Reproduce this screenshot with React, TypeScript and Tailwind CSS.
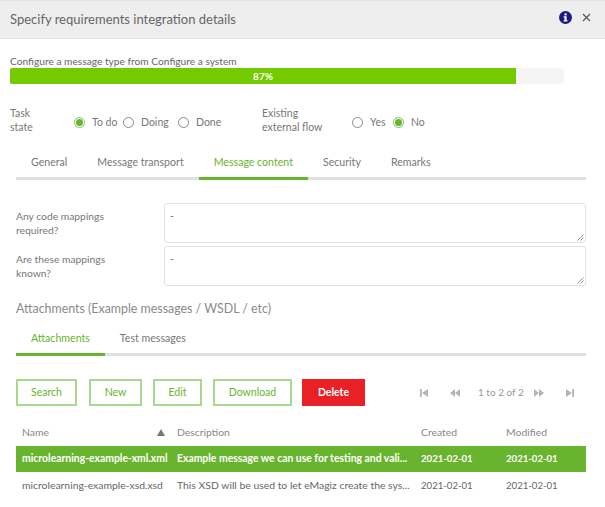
import React from 'react';

const tabs = ['General', 'Message transport', 'Message content', 'Security', 'Remarks'];

function Radio({ label, checked, className }: { label: string; checked?: boolean; className?: string }) {
  return (
    <div className={`flex items-center ${className ?? ''}`}>
      <span className={`flex h-[11px] w-[11px] items-center justify-center rounded-full border bg-white ${checked ? 'border-[#7cc35a]' : 'border-[#8a8a8a]'}`}>
        {checked && <span className="h-[7px] w-[7px] rounded-full bg-[#69b42e]" />}
      </span>
      <span className="ml-[7px] text-[10.5px] text-[#777]">{label}</span>
    </div>
  );
}

function Field({ label }: { label: React.ReactNode }) {
  return (
    <div className="flex">
      <div className="w-[148px] pt-[6px] text-[10.3px] leading-[14px] text-[#777]">{label}</div>
      <div className="relative h-[40px] flex-1 rounded-[3px] border border-[#e2e2e2] bg-white px-[5px] pt-[5px] text-[11px] leading-[14px] text-[#777]">
        -
        <svg className="absolute bottom-[1px] right-[1px]" width="7" height="7" viewBox="0 0 7 7">
          <path d="M0.5 6.5 L6.5 0.5 M3.5 6.5 L6.5 3.5" stroke="#777" strokeWidth="0.8" />
        </svg>
      </div>
    </div>
  );
}

function OutlineBtn({ label, width }: { label: string; width: string }) {
  return (
    <button className={`h-[27px] border-2 border-[#a9d88f] bg-white text-[10.5px] text-[#69b42e] ${width}`}>{label}</button>
  );
}

function PagerIcon({ d, className }: { d: string; className?: string }) {
  return (
    <svg className={className} width="10" height="10" viewBox="0 0 10 10">
      <path d={d} fill="#b5b5b5" />
    </svg>
  );
}

export default function App() {
  return (
    <div className="h-[507px] w-[605px] overflow-hidden bg-white font-['Lato','Open_Sans',sans-serif]">
      <div className="flex h-[39px] items-center justify-between border-t border-b border-[#e3e3e3] bg-[#eeeeee] pl-[10px] pr-[14px]">
        <span className="text-[13px] text-[#666]">Specify requirements integration details</span>
        <div className="-mt-[5px] flex items-center gap-[10px]">
          <svg width="13" height="13" viewBox="0 0 13 13">
            <circle cx="6.5" cy="6.5" r="6.5" fill="#1b1a7e" />
            <rect x="5.5" y="2.4" width="2.2" height="2" fill="#fff" />
            <path d="M4.6 5.3 H7.6 V9.2 H8.5 V10.5 H4.6 V9.2 H5.5 V6.6 H4.6 Z" fill="#fff" />
          </svg>
          <svg width="9" height="9" viewBox="0 0 9 9">
            <path d="M1 1 L8 8 M8 1 L1 8" stroke="#555" strokeWidth="1.2" />
          </svg>
        </div>
      </div>

      <div className="px-[10px] pt-[15px]">
        <div className="text-[10.2px] leading-[14px] text-[#666]">Configure a message type from Configure a system</div>
        <div className="h-[16px] w-[554px] overflow-hidden rounded-[2px] bg-[#f5f5f5]">
          <div className="flex h-full w-[506px] items-center justify-center bg-[#74c900] text-[10px] font-bold text-white">87%</div>
        </div>

        <div className="mt-[22px] flex h-[28px] items-start">
          <div className="w-[64px] text-[10.5px] leading-[14px] text-[#777]">Task<br />state</div>
          <div className="flex w-[188px] items-center pt-[9px]">
            <Radio label="To do" checked className="w-[49px]" />
            <Radio label="Doing" className="w-[55px]" />
            <Radio label="Done" />
          </div>
          <div className="w-[89px] text-[10.5px] leading-[14px] text-[#777]">Existing<br />external flow</div>
          <div className="ml-[1px] flex items-center pt-[9px]">
            <Radio label="Yes" className="w-[41px]" />
            <Radio label="No" checked />
          </div>
        </div>
      </div>

      <div className="pl-[16px] pr-[19px]">
        <div className="mt-[14px] flex h-[32px] border-b-[3px] border-[#e0e0e0]">
          {tabs.map((t, i) => (
            <div
              key={t}
              className={`-mb-[3px] flex h-[32px] items-center px-[15px] text-[10.6px] whitespace-nowrap ${i === 2 ? 'border-b-[3px] border-[#69b42e] text-[#69b42e]' : 'pb-[3px] text-[#777]'}`}
            >
              {t}
            </div>
          ))}
        </div>

        <div className="mt-[23px] flex flex-col gap-[3px]">
          <Field label={<>Any code mappings<br />required?</>} />
          <Field label={<>Are these mappings<br />known?</>} />
        </div>

        <div className="mt-[14px] text-[12.4px] leading-[18px] text-[#8a8a8a]">Attachments (Example messages / WSDL / etc)</div>

        <div className="mt-[6px] flex h-[32px] border-b-[3px] border-[#e0e0e0]">
          <div className="-mb-[3px] flex h-[32px] items-center border-b-[3px] border-[#69b42e] px-[15px] text-[10.6px] text-[#69b42e]">Attachments</div>
          <div className="flex h-[29px] items-center px-[15px] text-[10.6px] text-[#777]">Test messages</div>
        </div>

        <div className="mt-[23px] flex items-center">
          <OutlineBtn label="Search" width="w-[61px]" />
          <div className="w-[12px]" />
          <OutlineBtn label="New" width="w-[53px]" />
          <div className="w-[11px]" />
          <OutlineBtn label="Edit" width="w-[49px]" />
          <div className="w-[11px]" />
          <OutlineBtn label="Download" width="w-[79px]" />
          <div className="w-[10px]" />
          <button className="h-[27px] w-[63px] bg-[#e92025] text-[10.5px] font-bold text-white">Delete</button>
          <div className="ml-[54px] flex items-center text-[10px] text-[#999]">
            <PagerIcon d="M1 1 H2.8 V9 H1 Z M9 1 V9 L3 5 Z" />
            <PagerIcon d="M5 1 V9 L0 5 Z M10 1 V9 L5 5 Z" className="ml-[21px]" />
            <span className="ml-[18px]">1 to 2 of 2</span>
            <PagerIcon d="M0 1 V9 L5 5 Z M5 1 V9 L10 5 Z" className="ml-[10px]" />
            <PagerIcon d="M1 1 V9 L7 5 Z M7.2 1 H9 V9 H7.2 Z" className="ml-[21px]" />
          </div>
        </div>

        <div className="mt-[14px] text-[10.4px]">
          <div className="grid h-[26px] grid-cols-[155px_244px_85px_1fr] items-center text-[#888]">
            <div className="flex items-center justify-between pl-[6px] pr-[6px]">
              <span>Name</span>
              <svg width="8" height="7" viewBox="0 0 8 7"><path d="M4 0 L8 7 H0 Z" fill="#777" /></svg>
            </div>
            <div className="pl-[6px]">Description</div>
            <div className="pl-[6px]">Created</div>
            <div className="pl-[6px]">Modified</div>
          </div>
          <div className="grid h-[26px] grid-cols-[155px_244px_85px_1fr] items-center bg-[#69b42e] font-bold text-white">
            <div className="whitespace-nowrap pl-[6px]">microlearning-example-xml.xml</div>
            <div className="whitespace-nowrap pl-[6px]">Example message we can use for testing and vali...</div>
            <div className="pl-[6px] text-[9.6px]">2021-02-01</div>
            <div className="pl-[6px] text-[9.6px]">2021-02-01</div>
          </div>
          <div className="grid h-[28px] grid-cols-[155px_244px_85px_1fr] items-center text-[#666]">
            <div className="whitespace-nowrap pl-[6px]">microlearning-example-xsd.xsd</div>
            <div className="whitespace-nowrap pl-[6px]">This XSD will be used to let eMagiz create the sys...</div>
            <div className="pl-[6px] text-[9.6px]">2021-02-01</div>
            <div className="pl-[6px] text-[9.6px]">2021-02-01</div>
          </div>
        </div>
      </div>
    </div>
  );
}
